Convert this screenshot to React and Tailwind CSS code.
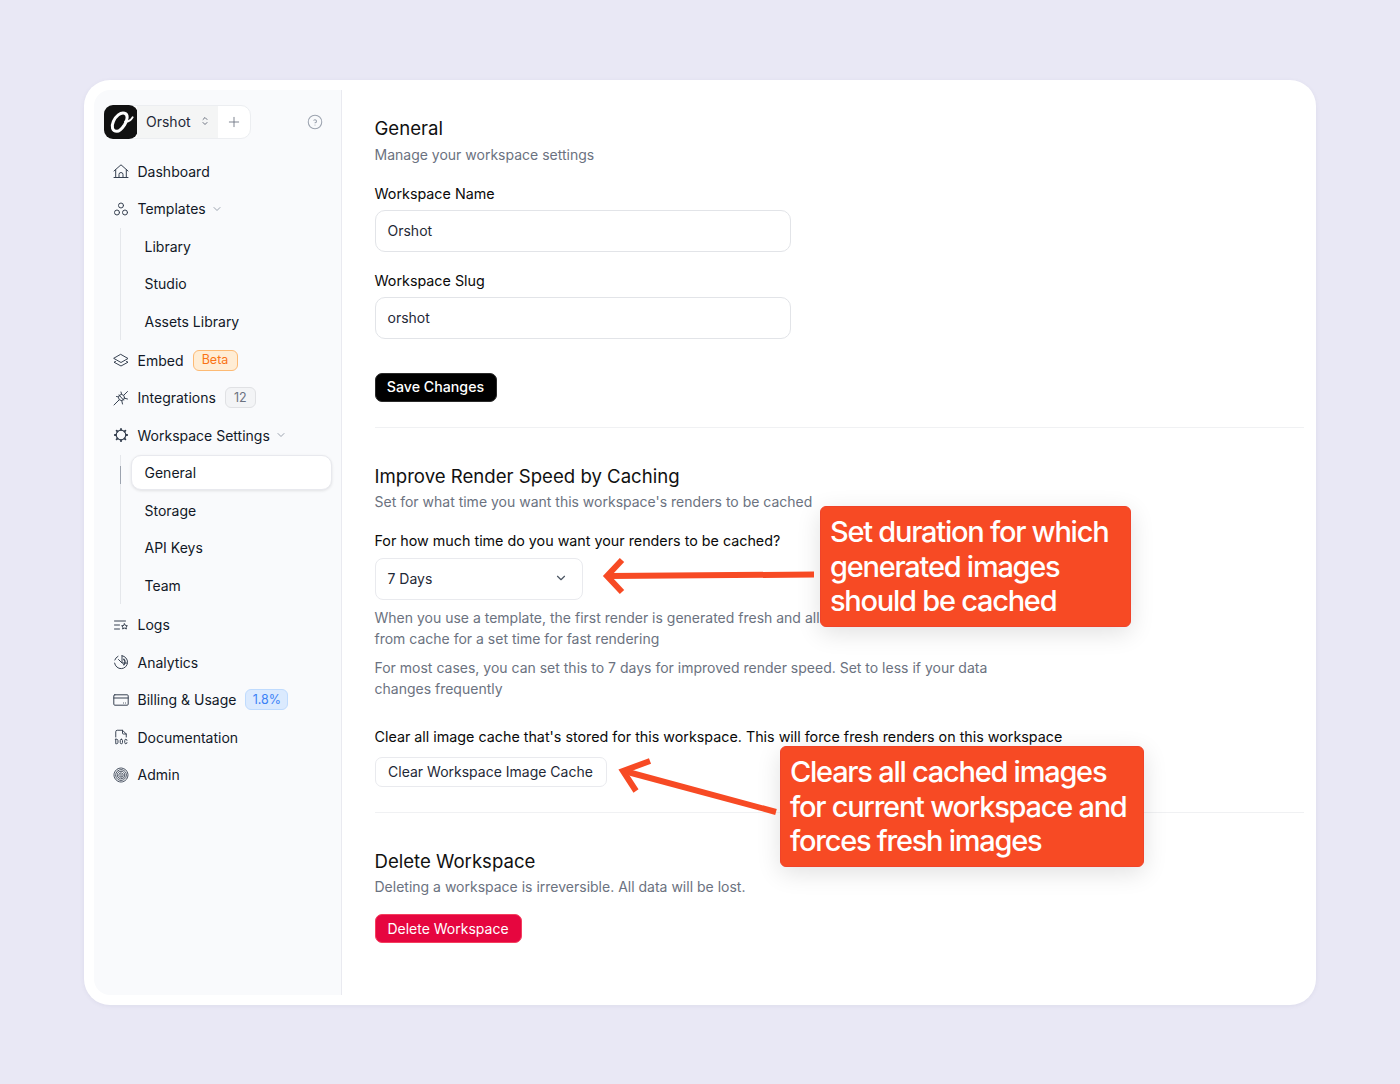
import React from "react";
import { TbFileTypeDoc, TbHelpCircle, TbSelector, TbPlus, TbChevronDown } from "react-icons/tb";

const SvgI = ({ children }) => (
  <svg viewBox="0 0 16 16" fill="none" stroke="currentColor" strokeWidth="1" strokeLinecap="round" strokeLinejoin="round" className="h-4 w-4 shrink-0">{children}</svg>
);
const HomeI = () => (
  <SvgI>
    <path d="M1 8L8 1.800 15 8M2.700 6.800V14M13.300 6.800V14M1 14.500h14" />
    <path d="M6 14v-2.500a2 2 0 0 1 4 0V14" />
  </SvgI>
);
const CirclesI = () => (
  <SvgI>
    <circle cx="8" cy="4.500" r="2.500" />
    <circle cx="4" cy="11.500" r="2.500" />
    <circle cx="12" cy="11.500" r="2.500" />
  </SvgI>
);
const LayersI = () => (
  <SvgI>
    <path d="M8 2.500L15 6.500 8 10.500 1 6.500z" />
    <path d="M2.500 9.500L1 10.200 8 14 15 10.200 13.500 9.500" />
  </SvgI>
);
const PlugX = () => (
  <SvgI>
    <circle cx="8.500" cy="7.500" r="3" />
    <path d="M1 15l5-5M11 5l3.500-3.500M3.500 6.500l2 .500M8 2l.500 2M14.500 9l-3-.800M9.500 14l-.800-3.500M6 5l4.500 5" />
  </SvgI>
);
const GearI = () => (
  <svg viewBox="0 0 16 16" fill="none" stroke="currentColor" strokeWidth="1.200" strokeLinecap="round" strokeLinejoin="round" className="h-4 w-4 shrink-0">
    <circle cx="8" cy="8" r="4.800" />
    <path d="M8 1.800v1.200M8 13v1.200M1.800 8H3M13 8h1.200M3.600 3.600l.9 .9M11.500 11.500l.9 .9M3.600 12.400l.9-.9M11.500 4.500l.9-.9" strokeWidth="1.800" />
  </svg>
);
const LogsI = () => (
  <SvgI>
    <path d="M1.500 4h11M1.500 8h5M1.500 12h5" />
    <path d="M11.500 6.800l1 1.700 1.900 .300-1.400 1.300.400 1.900-1.900-.900-1.900 .900.400-1.900-1.400-1.300 1.900-.300z" />
  </SvgI>
);
const PieI = () => (
  <SvgI>
    <path d="M9 1.700a6.500 6.500 0 1 1-7.400 7.400" />
    <path d="M1.800 6A6.500 6.500 0 0 1 5 2.300M5.500 5.500L9 9M9 1.700V9h5" />
    <path d="M10.800 5.200a4 4 0 0 1 0 5.600" strokeWidth="1.500" />
  </SvgI>
);
const CardI = () => (
  <SvgI>
    <rect x="0.800" y="2.800" width="14.400" height="10.400" rx="1" />
    <path d="M0.800 6h14.400M10.500 11h.01M12.500 11h.01" />
  </SvgI>
);
const PrintI = () => (
  <svg viewBox="0 0 16 16" fill="none" stroke="currentColor" strokeWidth="0.900" strokeLinecap="round" className="h-4 w-4 shrink-0">
    <circle cx="8" cy="8" r="7" strokeDasharray="4 0.800" />
    <circle cx="8" cy="8" r="5.400" strokeDasharray="5 1" />
    <circle cx="8" cy="8" r="3.800" strokeDasharray="6 1" />
    <circle cx="8" cy="8" r="2.200" strokeDasharray="4 1" />
    <path d="M8 7v2.500" />
  </svg>
);

function Row({ icon, children, badge }) {
  return (
    <div className="flex h-[37.5px] items-center pl-[19px] text-[#111827]">
      <span className="mr-[8.500px] text-[#374151]">{icon}</span>
      <span>{children}</span>
      {badge}
    </div>
  );
}

function Sub({ items, active }) {
  return (
    <div className="relative ml-[26px] border-l border-[#e5e7eb] pl-[10px]">
      {active && <span className="absolute left-[-1px] top-[11px] h-[18px] w-px bg-[#9ca3af]" />}
      {items.map((t) => (
        <div key={t} className={t === active
          ? "my-[1.25px] flex h-[35px] w-[201px] items-center rounded-[10px] border border-[#e8e9ee] bg-white pl-[12.500px] text-[#111827] shadow-[0_1px_3px_rgba(0,0,0,0.1)]"
          : "flex h-[37.5px] items-center pl-[13.500px] text-[#111827]"}>{t}</div>
      ))}
    </div>
  );
}

function Label({ children, className = "" }) {
  return <div className={"h-[22px] text-[14.300px] leading-[22px] whitespace-nowrap text-[#0a0a0a] " + className}>{children}</div>;
}
function Muted({ children, className = "" }) {
  return <div className={"text-[#6b7280] " + className}>{children}</div>;
}
function Title({ children }) {
  return <div className="text-[18.600px] leading-[26px] text-[#111111]">{children}</div>;
}
function Input({ value }) {
  return (
    <div className="flex h-[42px] w-[416px] items-center rounded-[10px] border-[1.500px] border-[#e2e4e8] bg-white pb-px pl-[12px] text-[#1f2937]">{value}</div>
  );
}

const noteClass = "absolute h-[121px] rounded-[6px] border border-[#f0432a] bg-[#f74a24] pl-[9px] pt-[8px] text-[29px] font-[550] leading-[34.500px] tracking-[-1.250px] whitespace-nowrap text-white shadow-[0_6px_24px_rgba(0,0,0,0.12)]";

export default function App() {
  return (
    <div className="relative h-[1084px] w-[1400px] bg-[#e9e8f5] pt-[80px] pl-[84px] font-['Inter',sans-serif] text-[14px]">
      <div className="flex h-[925px] w-[1232px] rounded-[26px] bg-white p-[10px] shadow-[0_1px_4px_rgba(90,90,130,0.08)]">
        {/* sidebar */}
        <aside className="h-[905px] w-[247.500px] shrink-0 rounded-l-[16px] border-r border-[#e9eaf0] bg-[#f9fafc] pt-[14.500px]">
          <div className="flex h-[34px] items-center pl-[10px] pr-[17px]">
            <div className="flex h-[34px] items-stretch rounded-[10px] border border-[#eceef1] bg-white">
              <div className="-m-px flex h-[34px] w-[34px] items-center justify-center rounded-[9px] bg-[#111111]">
                <svg viewBox="0 0 24 24" className="h-[28px] w-[28px]" fill="none" stroke="white" strokeWidth="2.600" strokeLinecap="round">
                  <path d="M8.500 20C4.500 20 3.500 16 5.500 11.500C7.500 7 11.500 3.500 15 4.500C18.500 5.500 17.500 10.500 15 14.500C13 17.500 10.500 20 8.500 20Z" />
                  <path d="M15.500 11.500C18 12 20.500 10.500 22 8" strokeWidth="1.600" />
                </svg>
              </div>
              <div className="flex w-[81px] items-center bg-[#f4f5f5] pb-px pl-[9px] text-[#1f2937]">
                Orshot
                <TbSelector className="ml-[8px] h-[12px] w-[12px] text-[#6b7280]" />
              </div>
              <div className="flex w-[32px] items-center justify-center text-[#6b7280]"><TbPlus className="h-[16px] w-[16px]" strokeWidth={1.300} /></div>
            </div>
            <TbHelpCircle className="ml-auto h-[18px] w-[18px] text-[#9ca3af]" strokeWidth={1.400} />
          </div>
          <div className="mt-[14px]">
            <Row icon={<HomeI />}>Dashboard</Row>
            <Row icon={<CirclesI />} badge={<TbChevronDown className="ml-[5px] h-[12px] w-[12px] text-[#9ca3af]" />}>Templates</Row>
            <Sub items={["Library", "Studio", "Assets Library"]} />
            <div className="h-[1.500px]" />
            <Row icon={<LayersI />} badge={<span className="ml-[9px] flex h-[21px] w-[45px] items-center justify-center rounded-[6px] border border-[#fdba74] bg-[#ffedd5] pt-px text-[12.500px] text-[#f97316]">Beta</span>}>Embed</Row>
            <Row icon={<PlugX />} badge={<span className="ml-[9px] flex h-[21px] w-[31px] items-center justify-center rounded-[6px] border border-[#e0e1e4] bg-[#f3f4f6] pt-px text-[12.500px] text-[#6b7280]">12</span>}>Integrations</Row>
            <Row icon={<GearI />} badge={<TbChevronDown className="ml-[5px] h-[12px] w-[12px] text-[#9ca3af]" />}>Workspace Settings</Row>
            <Sub items={["General", "Storage", "API Keys", "Team"]} active="General" />
            <div className="h-[2px]" />
            <Row icon={<LogsI />}>Logs</Row>
            <Row icon={<PieI />}>Analytics</Row>
            <Row icon={<CardI />} badge={<span className="ml-[9px] flex h-[21px] w-[43px] items-center justify-center rounded-[6px] border border-[#bfdbfe] bg-[#dbeafe] pt-px text-[12.500px] text-[#3b82f6]">1.8%</span>}>Billing &amp; Usage</Row>
            <Row icon={<TbFileTypeDoc className="-mx-px h-[18px] w-[18px]" strokeWidth={1.300} />}>Documentation</Row>
            <Row icon={<PrintI />}>Admin</Row>
          </div>
        </aside>
        {/* main */}
        <main className="flex-1 pl-[33px] pr-[2px] pt-[25px]">
          <Title>General</Title>
          <Muted className="mt-[3px] h-[22px] leading-[22px]">Manage your workspace settings</Muted>
          <Label className="mt-[17px] mb-[5px]">Workspace Name</Label>
          <Input value="Orshot" />
          <Label className="mt-[18px] mb-[5px]">Workspace Slug</Label>
          <Input value="orshot" />
          <div className="mt-[34px] flex h-[29px] w-[122px] items-center justify-center rounded-[7px] border border-[#2a2a2a] bg-black pb-px text-[14.200px] font-medium text-white">Save Changes</div>
          <div className="mt-[25px] border-t border-[#f0f1f3]" />
          <div className="mt-[35px]"><Title>Improve Render Speed by Caching</Title></div>
          <Muted className="mt-[2px] h-[22px] leading-[22px]">Set for what time you want this workspace's renders to be cached</Muted>
          <Label className="mt-[17px] mb-[6px]">For how much time do you want your renders to be cached?</Label>
          <div className="flex h-[42px] w-[208px] items-center justify-between rounded-[8px] border border-[#e9eaee] bg-white pb-[2px] pl-[12px] pr-[14px] text-[#1f2937]">
            7 Days
            <TbChevronDown className="h-[14px] w-[14px] text-[#4b5563]" />
          </div>
          <Muted className="mt-[7px] w-[640px] leading-[21px]">When you use a template, the first render is generated fresh and all<br />from cache for a set time for fast rendering</Muted>
          <Muted className="mt-[8px] w-[640px] leading-[21px]">For most cases, you can set this to 7 days for improved render speed. Set to less if your data changes frequently</Muted>
          <Label className="mt-[27px] mb-[9px]">Clear all image cache that's stored for this workspace. This will force fresh renders on this workspace</Label>
          <div className="flex h-[30px] w-[232px] items-center justify-center rounded-[7px] border border-[#e9eaee] bg-white pb-px text-[#1f2937]">Clear Workspace Image Cache</div>
          <div className="mt-[25px] border-t border-[#f0f1f3]" />
          <div className="mt-[35px]"><Title>Delete Workspace</Title></div>
          <Muted className="mt-[2px] h-[22px] leading-[22px]">Deleting a workspace is irreversible. All data will be lost.</Muted>
          <div className="mt-[16px] flex h-[29px] w-[147px] items-center justify-center rounded-[7px] border border-[#f43f5e] bg-[#e6063f] pb-px text-white">Delete Workspace</div>
        </main>
      </div>

      {/* annotations */}
      <div className={noteClass + " left-[820px] top-[506px] w-[311px]"}>
        Set duration for which<br />generated images<br />should be cached
      </div>
      <div className={noteClass + " left-[780px] top-[746px] w-[364px]"}>
        Clears all cached images<br />for current workspace and<br />forces fresh images
      </div>
      <svg className="absolute left-[600px] top-[550px]" width="220" height="50" viewBox="0 0 220 50" fill="none" stroke="#f74a24" strokeWidth="6">
        <path d="M214 24.500L10 26" />
        <path d="M22 10L7 26l15 16" />
      </svg>
      <svg className="absolute left-[610px] top-[750px]" width="170" height="70" viewBox="0 0 170 70" fill="none" stroke="#f74a24" strokeWidth="6">
        <path d="M166 62L14 21" />
        <path d="M40 11L13 21l13 20" />
      </svg>
    </div>
  );
}
